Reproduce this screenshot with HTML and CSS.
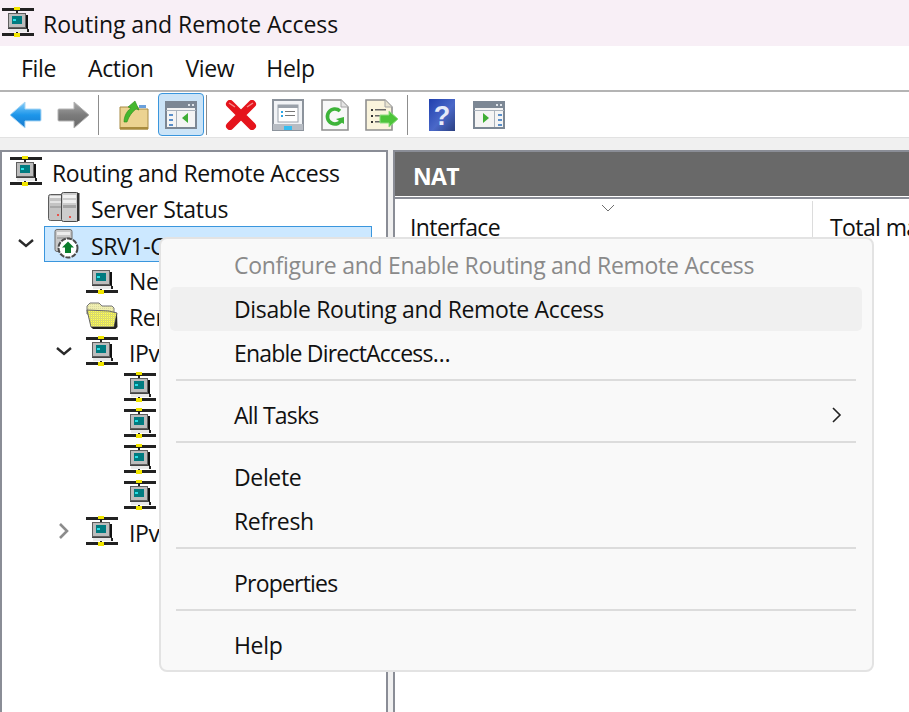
FILE: index.html

```html
<!DOCTYPE html>
<html lang="en">
<head>
  <meta charset="UTF-8">
  <title>Routing and Remote Access</title>
  <link rel="stylesheet" href="styles.css">
</head>
<body>

<svg class="defs" width="0" height="0">
  <defs>
    <linearGradient id="blueArrow" x1="0" y1="0" x2="0" y2="1">
      <stop offset="0" stop-color="#8ad0fa"/>
      <stop offset="0.5" stop-color="#1d96ea"/>
      <stop offset="1" stop-color="#1878cc"/>
    </linearGradient>
    <linearGradient id="grayArrow" x1="0" y1="0" x2="0" y2="1">
      <stop offset="0" stop-color="#a8a8a8"/>
      <stop offset="0.5" stop-color="#7c7c7c"/>
      <stop offset="1" stop-color="#686868"/>
    </linearGradient>
    <linearGradient id="helpBook" x1="0" y1="0" x2="1" y2="1">
      <stop offset="0" stop-color="#1f3fae"/>
      <stop offset="0.55" stop-color="#4a68c8"/>
      <stop offset="1" stop-color="#2b3f80"/>
    </linearGradient>
    <pattern id="dither" width="2" height="2" patternUnits="userSpaceOnUse">
      <rect width="2" height="2" fill="#e6e64a"/>
      <rect width="1" height="1" fill="#cfcf90"/>
      <rect x="1" y="1" width="1" height="1" fill="#f4f470"/>
    </pattern>
    <pattern id="ditherPale" width="2" height="2" patternUnits="userSpaceOnUse">
      <rect width="2" height="2" fill="#f0efb0"/>
      <rect width="1" height="1" fill="#d8d8a0"/>
    </pattern>

    <g id="pcbody" shape-rendering="crispEdges">
      <rect x="6" y="6" width="18" height="15" fill="#5e5e5e"/>
      <rect x="7" y="7" width="16" height="13" fill="#bcbcbc"/>
      <rect x="10" y="9" width="10" height="8" fill="#007b80"/>
      <rect x="11" y="12" width="3" height="2" fill="#27e0e6"/>
      <rect x="24" y="8" width="2" height="14" fill="#111"/>
      <rect x="6" y="21" width="19" height="1" fill="#444"/>
      <rect x="7" y="22" width="18" height="3" fill="#e9e9e9"/>
      <rect x="25" y="22" width="2" height="3" fill="#222"/>
      <rect x="14" y="25" width="2" height="1" fill="#222"/>
      <rect x="0" y="26" width="32" height="3" fill="#222"/>
      <rect x="12" y="26" width="6" height="4" fill="#f2e600"/>
    </g>
    <symbol id="pc" viewBox="0 0 32 30">
      <g shape-rendering="crispEdges">
        <rect x="0" y="1" width="32" height="3" fill="#222"/>
        <rect x="12" y="0" width="6" height="3" fill="#f2e600"/>
        <rect x="14" y="4" width="2" height="2" fill="#222"/>
      </g>
      <use href="#pcbody"/>
    </symbol>
    <symbol id="pcnode" viewBox="0 0 32 30">
      <use href="#pcbody"/>
    </symbol>
    <symbol id="chev-down" viewBox="0 0 16 16">
      <path d="M1 5l7 6 7-6" fill="none" stroke="#2a2a2a" stroke-width="2.4"/>
    </symbol>
    <symbol id="chev-right" viewBox="0 0 16 16">
      <path d="M4 1l7 7-7 7" fill="none" stroke="#8c8c8c" stroke-width="2.6"/>
    </symbol>
  </defs>
</svg>

<div class="titlebar">
  <svg class="title-icon" width="34" height="30"><use href="#pc" width="32" height="30"/></svg>
  <span class="title-text">Routing and Remote Access</span>
</div>

<div class="menubar">
  <span>File</span>
  <span>Action</span>
  <span>View</span>
  <span>Help</span>
</div>

<div class="toolbar">
  <div class="tb-group">
    <button class="tb-btn">
      <svg width="34" height="30" viewBox="0 0 34 30"><path d="M1 15L16 2v7h15a1 1 0 0 1 1 1v10a1 1 0 0 1-1 1H16v7z" fill="url(#blueArrow)" stroke="#a9d6f4" stroke-width="1"/></svg>
    </button>
    <button class="tb-btn">
      <svg width="34" height="30" viewBox="0 0 34 30"><path d="M33 15L18 2v7H3a1 1 0 0 0-1 1v10a1 1 0 0 0 1 1h15v7z" fill="url(#grayArrow)" stroke="#b4b4b4" stroke-width="1"/></svg>
    </button>
  </div>
  <div class="tb-sep tb-sep-first"></div>
  <div class="tb-group">
    <button class="tb-btn">
      <svg width="30" height="30" viewBox="0 0 30 30">
        <path d="M1 7h18v2h10v20H1z" fill="#ecd391" stroke="#a68a45"/>
        <rect x="1" y="27" width="28" height="2.5" fill="#a98c3e"/>
        <rect x="20" y="5" width="7" height="3" fill="#6aa0dc"/>
        <path d="M5 22C5 15 9 10 12 8L9 7l7-6 4 9-3-1c-4 3-7 7-9 13z" fill="#45b82e" stroke="#2e8a1c" stroke-width=".6"/>
      </svg>
    </button>
    <button class="tb-btn tb-active">
      <svg width="32" height="28" viewBox="0 0 32 28">
        <rect x="1" y="1" width="30" height="26" fill="#f4f4f4" stroke="#7c8794" stroke-width="2"/>
        <rect x="1" y="1" width="30" height="6" fill="#7c8794"/>
        <rect x="23" y="3" width="2" height="2" fill="#dfe4ea"/>
        <rect x="27" y="3" width="2" height="2" fill="#dfe4ea"/>
        <rect x="1" y="9" width="30" height="1" fill="#a9b2bc"/>
        <rect x="11" y="10" width="1" height="16" fill="#a9b2bc"/>
        <rect x="4" y="13" width="4" height="2" fill="#5b8fc9"/>
        <rect x="4" y="18" width="4" height="2" fill="#5b8fc9"/>
        <rect x="4" y="23" width="4" height="2" fill="#5b8fc9"/>
        <path d="M17 17l6-5v10z" fill="#3fae35"/>
      </svg>
    </button>
  </div>
  <div class="tb-sep"></div>
  <div class="tb-group">
    <button class="tb-btn">
      <svg width="32" height="30" viewBox="0 0 32 30"><path d="M5 4l22 22M27 4L5 26" fill="none" stroke="#e5141c" stroke-width="8" stroke-linecap="round"/><path d="M4 3l6 4M28 3l-6 4" stroke="#f58a8a" stroke-width="1.5"/></svg>
    </button>
    <button class="tb-btn">
      <svg width="32" height="32" viewBox="0 0 32 32">
        <rect x="1" y="1" width="30" height="30" fill="#f1f3f6" stroke="#8c939c" stroke-width="2"/>
        <rect x="1" y="25" width="30" height="6" fill="#b7bcc3"/>
        <rect x="12" y="27" width="8" height="4" fill="#37bdf0"/>
        <rect x="6" y="6" width="20" height="17" fill="#fff" stroke="#9aa1aa"/>
        <rect x="6" y="6" width="20" height="3" fill="#9aa1aa"/>
        <rect x="9" y="12" width="2" height="2" fill="#2aa7e8"/>
        <rect x="13" y="12" width="10" height="1" fill="#777"/>
        <rect x="9" y="16" width="2" height="2" fill="#2aa7e8"/>
        <rect x="13" y="16" width="10" height="1" fill="#777"/>
      </svg>
    </button>
    <button class="tb-btn">
      <svg width="28" height="32" viewBox="0 0 28 32">
        <path d="M1 1h19l7 7v23H1z" fill="#f8f8f8" stroke="#8f8f8f" stroke-width="1.6"/>
        <path d="M20 1v7h7" fill="#e4e4e4" stroke="#a4a4a4"/>
        <path d="M19 12a7.5 7.5 0 1 0 2 8" fill="none" stroke="#3eb43a" stroke-width="3.6"/>
        <path d="M15 20l8-2 0 7z" fill="#3eb43a"/>
      </svg>
    </button>
    <button class="tb-btn">
      <svg width="34" height="32" viewBox="0 0 34 32">
        <path d="M1 1h19l7 7v23H1z" fill="#faf4dc" stroke="#8f8f8f" stroke-width="1.6"/>
        <path d="M20 1v7h7" fill="#e8e4d2" stroke="#a4a4a4"/>
        <rect x="6" y="10" width="2" height="2" fill="#333"/>
        <rect x="10" y="10" width="11" height="1.5" fill="#666"/>
        <rect x="6" y="16" width="2" height="2" fill="#333"/>
        <rect x="10" y="16" width="7" height="1.5" fill="#666"/>
        <rect x="6" y="22" width="2" height="2" fill="#333"/>
        <rect x="10" y="22" width="7" height="1.5" fill="#666"/>
        <path d="M33 20l-9-8v4H15v8h9v4z" fill="#4dc43a" stroke="#8fdd80"/>
      </svg>
    </button>
  </div>
  <div class="tb-sep"></div>
  <div class="tb-group">
    <button class="tb-btn">
      <svg width="26" height="32" viewBox="0 0 26 32">
        <rect width="26" height="32" fill="url(#helpBook)"/>
        <text x="13" y="26" class="help-mark">?</text>
      </svg>
    </button>
    <button class="tb-btn">
      <svg width="32" height="28" viewBox="0 0 32 28">
        <rect x="1" y="1" width="30" height="26" fill="#f4f4f4" stroke="#7c8794" stroke-width="2"/>
        <rect x="1" y="1" width="30" height="6" fill="#7c8794"/>
        <rect x="23" y="3" width="2" height="2" fill="#dfe4ea"/>
        <rect x="27" y="3" width="2" height="2" fill="#dfe4ea"/>
        <rect x="1" y="9" width="30" height="1" fill="#a9b2bc"/>
        <rect x="21" y="10" width="1" height="16" fill="#a9b2bc"/>
        <rect x="25" y="13" width="4" height="2" fill="#5b8fc9"/>
        <rect x="25" y="18" width="4" height="2" fill="#5b8fc9"/>
        <rect x="25" y="23" width="4" height="2" fill="#5b8fc9"/>
        <path d="M10 12l6 5-6 5z" fill="#3fae35"/>
      </svg>
    </button>
  </div>
</div>

<div class="main">
  <div class="tree">
    <div class="row">
      <svg class="node-icon" width="32" height="30"><use href="#pc" width="32" height="30"/></svg>
      <span class="label label-root">Routing and Remote Access</span>
    </div>
    <div class="row">
      <span class="slot"></span>
      <svg class="node-icon" width="32" height="30" viewBox="0 0 32 30">
        <rect x="0.5" y="2.5" width="15" height="26" rx="2" fill="#c4c4c4" stroke="#5c5c5c"/>
        <rect x="2" y="4" width="12" height="2" fill="#efefef"/>
        <rect x="2" y="9" width="12" height="2" fill="#e4e4e4"/>
        <rect x="2" y="14" width="12" height="2" fill="#a8a8a8"/>
        <rect x="13.5" y="0.5" width="17" height="29" rx="2" fill="#cdcdcd" stroke="#4a4a4a"/>
        <rect x="15" y="3" width="13" height="3" fill="#f2f2f2"/>
        <rect x="15" y="8" width="13" height="3" fill="#efefef"/>
        <rect x="15" y="13" width="13" height="3" fill="#a4a4a4"/>
        <rect x="29" y="1" width="2.5" height="28" fill="#333"/>
        <rect x="9" y="22" width="2" height="2" fill="#e8524a"/>
        <rect x="21" y="24" width="2" height="2" fill="#e8524a"/>
      </svg>
      <span class="label">Server Status</span>
    </div>
    <div class="row">
      <span class="slot"><svg width="16" height="16"><use href="#chev-down"/></svg></span>
      <div class="node node-selected">
        <svg class="node-icon" width="32" height="30" viewBox="0 0 32 30">
          <rect x="7" y="0.5" width="17" height="22" rx="2" fill="#c8c8c8" stroke="#6c6c6c"/>
          <rect x="9" y="3" width="13" height="3" fill="#ececec"/>
          <rect x="9" y="8" width="13" height="2" fill="#a8a8a8"/>
          <circle cx="20" cy="19" r="9.5" fill="#fff" stroke="#4a4a4a" stroke-width="2" stroke-dasharray="5 1.2"/>
          <path d="M20 12.5l6 6h-3v5.5h-6v-5.5h-3z" fill="#0a7d2c"/>
        </svg>
        <span class="label">SRV1-GW (local)</span>
      </div>
    </div>
    <div class="row">
      <span class="slot"></span><span class="slot"></span>
      <svg class="node-icon" width="32" height="30"><use href="#pcnode" width="32" height="30"/></svg>
      <span class="label">Network Interfaces</span>
    </div>
    <div class="row">
      <span class="slot"></span><span class="slot"></span>
      <svg class="node-icon" width="32" height="30" viewBox="0 0 32 30">
        <path d="M1 6l3-3h9l3 3h10l2 2v6H1z" fill="url(#ditherPale)" stroke="#777"/>
        <path d="M1 10l22 1 8 2-3 14H5z" fill="url(#dither)" stroke="#666"/>
        <path d="M5 27h23l3-14 0.5 14-2 2H7z" fill="#222"/>
      </svg>
      <span class="label">Remote Access Clients</span>
    </div>
    <div class="row">
      <span class="slot"></span>
      <span class="slot"><svg width="16" height="16"><use href="#chev-down"/></svg></span>
      <svg class="node-icon" width="32" height="30"><use href="#pc" width="32" height="30"/></svg>
      <span class="label">IPv4</span>
    </div>
    <div class="row">
      <span class="slot"></span><span class="slot"></span><span class="slot"></span>
      <svg class="node-icon" width="32" height="30"><use href="#pc" width="32" height="30"/></svg>
    </div>
    <div class="row">
      <span class="slot"></span><span class="slot"></span><span class="slot"></span>
      <svg class="node-icon" width="32" height="30"><use href="#pc" width="32" height="30"/></svg>
    </div>
    <div class="row">
      <span class="slot"></span><span class="slot"></span><span class="slot"></span>
      <svg class="node-icon" width="32" height="30"><use href="#pc" width="32" height="30"/></svg>
    </div>
    <div class="row">
      <span class="slot"></span><span class="slot"></span><span class="slot"></span>
      <svg class="node-icon" width="32" height="30"><use href="#pc" width="32" height="30"/></svg>
    </div>
    <div class="row">
      <span class="slot"></span>
      <span class="slot"><svg width="16" height="16"><use href="#chev-right"/></svg></span>
      <svg class="node-icon" width="32" height="30"><use href="#pc" width="32" height="30"/></svg>
      <span class="label">IPv6</span>
    </div>
  </div>

  <div class="detail">
    <div class="detail-head">NAT</div>
    <div class="list">
      <div class="list-cols">
        <div class="col col-first">Interface</div>
        <div class="col">Total mappings</div>
      </div>
      <svg class="sort-mark" width="14" height="8" viewBox="0 0 14 8"><path d="M1 1l6 6 6-6" fill="none" stroke="#6f6f6f" stroke-width="1"/></svg>
    </div>
  </div>
</div>

<div class="ctx">
  <div class="ctx-item ctx-disabled">Configure and Enable Routing and Remote Access</div>
  <div class="ctx-item ctx-hover">Disable Routing and Remote Access</div>
  <div class="ctx-item ctx-tight">Enable DirectAccess…</div>
  <div class="ctx-sep"></div>
  <div class="ctx-item ctx-tight">All Tasks
    <svg class="ctx-arrow" width="10" height="16" viewBox="0 0 10 16"><path d="M1 1l7 7-7 7" fill="none" stroke="#222" stroke-width="1.6"/></svg>
  </div>
  <div class="ctx-sep"></div>
  <div class="ctx-item">Delete</div>
  <div class="ctx-item">Refresh</div>
  <div class="ctx-sep"></div>
  <div class="ctx-item ctx-tight">Properties</div>
  <div class="ctx-sep"></div>
  <div class="ctx-item">Help</div>
</div>

</body>
</html>
```

FILE: styles.css

```css
* {
  box-sizing: border-box;
}
html, body {
  height: 100%;
}
body {
  margin: 0;
  display: flex;
  flex-direction: column;
  overflow: hidden;
  background-color: #f0f0f0;
  color: #111;
  font-family: "Open Sans", "Noto Sans", sans-serif;
  font-size: 23px;
  letter-spacing: -0.35px;
}
.defs {
  position: absolute;
}

.titlebar {
  height: 46px;
  flex: none;
  display: flex;
  align-items: center;
  gap: 7px;
  padding-left: 2px;
  background-color: #f8eff6;
}
.title-icon {
  margin-top: -2px;
}
.title-text {
  padding-top: 2px;
  letter-spacing: -0.05px;
}

.menubar {
  height: 46px;
  flex: none;
  display: flex;
  align-items: center;
  gap: 32px;
  padding-left: 21px;
  background-color: #fff;
  border-bottom: 2px solid #b4b4b4;
}

.toolbar {
  height: 46px;
  flex: none;
  display: flex;
  align-items: center;
  padding-left: 3px;
  background-color: #fff;
  border-bottom: 1px solid #e2e2e2;
}
.tb-group {
  display: flex;
  gap: 1px;
}
.tb-btn {
  width: 46px;
  height: 43px;
  padding: 0;
  display: flex;
  align-items: center;
  justify-content: center;
  background: none;
  border: 1px solid transparent;
  border-radius: 4px;
}
.tb-active {
  background-color: #cce4f7;
  border-color: #3a96dd;
}
.tb-sep {
  width: 1px;
  height: 40px;
  margin: 0 11px 0 2px;
  background-color: #8d8d8d;
}
.tb-sep-first {
  margin-right: 12px;
}
.help-mark {
  fill: #e6eaf8;
  font-family: "Liberation Sans", sans-serif;
  font-size: 27px;
  font-weight: bold;
  text-anchor: middle;
}

.main {
  flex: 1;
  min-height: 0;
  display: flex;
  gap: 5px;
  padding-top: 12px;
}
.tree {
  width: 388px;
  flex: none;
  padding: 1px 0 0 8px;
  background-color: #fff;
  border: 2px solid #8a8d96;
  border-bottom: 0;
}
.row {
  height: 36px;
  display: flex;
  align-items: center;
  white-space: nowrap;
}
.slot {
  width: 38px;
  flex: none;
  display: flex;
  justify-content: center;
  padding-right: 6px;
}
.node-icon {
  flex: none;
}
.label {
  margin-left: 11px;
  padding-top: 3px;
}
.label-root {
  margin-left: 10px;
}
.node {
  display: flex;
  align-items: center;
  flex: 1;
  height: 36px;
}
.node-selected {
  margin: 2px 14px 0 -4px;
  padding-left: 3px;
  background-color: #cce8ff;
  border: 1px solid #3a96dd;
}

.detail {
  flex: 1;
  min-width: 0;
  display: flex;
  flex-direction: column;
  background-color: #fff;
  border: 2px solid #8a8d96;
  border-width: 2px 0 0 2px;
}
.detail-head {
  height: 44px;
  flex: none;
  display: flex;
  align-items: center;
  padding: 3px 0 0 18px;
  background-color: #696969;
  color: #fff;
  font-weight: 700;
  letter-spacing: -0.6px;
}
.list {
  flex: 1;
  position: relative;
  overflow: hidden;
  margin-top: 1px;
  border-top: 2px solid #8a8d96;
}
.list-cols {
  display: flex;
  height: 56px;
  padding-top: 2px;
  white-space: nowrap;
  letter-spacing: -0.6px;
}
.col {
  padding: 10px 0 0 17px;
}
.col-first {
  width: 418px;
  flex: none;
  padding-left: 15px;
  border-right: 1px solid #dcdcdc;
}
.sort-mark {
  position: absolute;
  top: 5px;
  left: 206px;
}

.ctx {
  position: absolute;
  left: 159px;
  top: 237px;
  width: 715px;
  height: 435px;
  padding: 4px 10px 4px 9px;
  background-color: #f9f9f9;
  border: 2px solid #e3e3e3;
  border-radius: 8px;
}
.ctx-item {
  height: 44px;
  display: flex;
  align-items: center;
  justify-content: space-between;
  padding: 0 20px 0 64px;
  border-radius: 5px;
  white-space: nowrap;
}
.ctx-tight {
  letter-spacing: -0.8px;
}
.ctx-disabled {
  color: #8a8a8a;
  letter-spacing: -0.27px;
}
.ctx-hover {
  background-color: #f0f0f0;
}
.ctx-sep {
  height: 2px;
  margin: 4px 6px 12px;
  background-color: #dcdcdc;
}
```
